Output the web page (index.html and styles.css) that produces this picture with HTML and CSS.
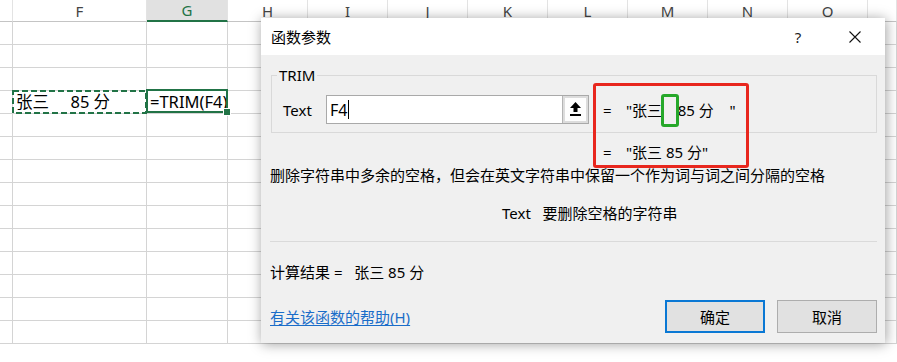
FILE: index.html
```html
<!DOCTYPE html>
<html lang="zh-CN">
<head>
  <meta charset="UTF-8" />
  <title>函数参数 - TRIM</title>
  <link rel="stylesheet" href="styles.css">
</head>
<body>

  <!-- worksheet behind the dialog -->
  <table class="sheet">
    <colgroup>
      <col class="c-e"><col class="c-f"><col class="c-g">
      <col class="c-n"><col class="c-n"><col class="c-n"><col class="c-n">
      <col class="c-n"><col class="c-n"><col class="c-n"><col class="c-n">
      <col>
    </colgroup>
    <tr class="head">
      <th></th><th>F</th><th class="active">G</th><th>H</th><th>I</th><th>J</th><th>K</th><th>L</th><th>M</th><th>N</th><th>O</th><th></th>
    </tr>
    <tr><td></td><td></td><td></td><td></td><td></td><td></td><td></td><td></td><td></td><td></td><td></td><td></td></tr>
    <tr><td></td><td></td><td></td><td></td><td></td><td></td><td></td><td></td><td></td><td></td><td></td><td></td></tr>
    <tr><td></td><td></td><td></td><td></td><td></td><td></td><td></td><td></td><td></td><td></td><td></td><td></td></tr>
    <tr>
      <td></td>
      <td class="src">张三     85 分<svg class="ants" width="135" height="24"><rect x="1" y="1" width="133" height="22" /></svg></td>
      <td class="sel">=TRIM(F4)</td>
      <td></td><td></td><td></td><td></td><td></td><td></td><td></td><td></td><td></td>
    </tr>
    <tr><td></td><td></td><td></td><td></td><td></td><td></td><td></td><td></td><td></td><td></td><td></td><td></td></tr>
    <tr><td></td><td></td><td></td><td></td><td></td><td></td><td></td><td></td><td></td><td></td><td></td><td></td></tr>
    <tr><td></td><td></td><td></td><td></td><td></td><td></td><td></td><td></td><td></td><td></td><td></td><td></td></tr>
    <tr><td></td><td></td><td></td><td></td><td></td><td></td><td></td><td></td><td></td><td></td><td></td><td></td></tr>
    <tr><td></td><td></td><td></td><td></td><td></td><td></td><td></td><td></td><td></td><td></td><td></td><td></td></tr>
    <tr><td></td><td></td><td></td><td></td><td></td><td></td><td></td><td></td><td></td><td></td><td></td><td></td></tr>
    <tr><td></td><td></td><td></td><td></td><td></td><td></td><td></td><td></td><td></td><td></td><td></td><td></td></tr>
    <tr><td></td><td></td><td></td><td></td><td></td><td></td><td></td><td></td><td></td><td></td><td></td><td></td></tr>
    <tr><td></td><td></td><td></td><td></td><td></td><td></td><td></td><td></td><td></td><td></td><td></td><td></td></tr>
    <tr><td></td><td></td><td></td><td></td><td></td><td></td><td></td><td></td><td></td><td></td><td></td><td></td></tr>
  </table>

  <!-- function arguments dialog -->
  <div class="dialog">
    <div class="titlebar">
      <span class="title">函数参数</span>
      <span class="help">?</span>
      <span class="close">
        <svg width="12" height="12" viewBox="0 0 12 12"><path d="M0.5 0.5 L11.5 11.5 M11.5 0.5 L0.5 11.5" /></svg>
      </span>
    </div>

    <div class="dialog-body">
      <fieldset class="args">
        <legend>TRIM</legend>
        <div class="arg-row">
          <label class="arg-name">Text</label>
          <div class="ref-input">
            <span class="ref-text">F4</span><span class="caret"></span>
            <span class="ref-btn">
              <span class="ref-icon">
                <svg width="11" height="15" viewBox="0 0 11 15"><path d="M5.5 0 L0 6 H3.5 V10 H7.5 V6 H11 Z" /><rect x="0" y="12" width="11" height="2" /></svg>
              </span>
            </span>
          </div>
          <span class="arg-value"><span class="eq">=</span>"张三    85 分    "</span>
        </div>
      </fieldset>

      <div class="result-line"><span class="eq">=</span>"张三 85 分"</div>

      <p class="desc">删除字符串中多余的空格，但会在英文字符串中保留一个作为词与词之间分隔的空格</p>
      <p class="param-desc">Text   要删除空格的字符串</p>

      <hr class="sep">

      <div class="calc">计算结果 =   张三 85 分</div>

      <div class="footer">
        <a class="help-link" href="#">有关该函数的帮助(H)</a>
        <button class="btn primary" type="button">确定</button>
        <button class="btn" type="button">取消</button>
      </div>
    </div>

    <!-- annotation boxes drawn over the screenshot -->
    <div class="mark mark-red"></div>
    <div class="mark mark-green"></div>
  </div>

</body>
</html>
```

FILE: styles.css
```css
* {
  box-sizing: border-box;
}

body {
  margin: 0;
  width: 897px;
  height: 362px;
  overflow: hidden;
  position: relative;
  background-color: #fff;
  font-family: "Noto Sans", "Noto Sans CJK SC", sans-serif;
  color: #000;
}

/* worksheet */
.sheet {
  width: 897px;
  border-collapse: separate;
  border-spacing: 0;
  table-layout: fixed;
  font-size: 16.5px;
}

.c-e { width: 13px; }
.c-f { width: 134px; }
.c-g { width: 81px; }
.c-n { width: 80px; }

.sheet tr {
  height: 23px;
}

.sheet tr.head {
  height: 22px;
}

.sheet th,
.sheet td {
  padding: 0;
  border-right: 1px solid #d4d4d4;
  border-bottom: 1px solid #d4d4d4;
  white-space: pre;
  text-align: left;
}

.sheet th {
  font-weight: normal;
  font-size: 15px;
  color: #444;
  text-align: center;
  vertical-align: middle;
  line-height: 20px;
  border-right-color: #e3e3e3;
  border-bottom-color: #c4c4c4;
}

.sheet th.active {
  background-color: #e1e1e1;
  color: #217346;
  border-bottom: 2px solid #217346;
}

.src,
.sel {
  position: relative;
  padding-left: 3px !important;
  line-height: 22px;
}

.ants {
  position: absolute;
  left: -1px;
  top: -1px;
}

.ants rect {
  fill: none;
  stroke: #217346;
  stroke-width: 2;
  stroke-dasharray: 6 3;
}

.sel::after {
  content: "";
  position: absolute;
  left: -1px;
  right: -1px;
  top: -2px;
  bottom: 0;
  border: 2px solid #217346;
}

.sel::before {
  content: "";
  position: absolute;
  right: -4px;
  bottom: -3px;
  width: 6px;
  height: 6px;
  background-color: #217346;
  border: 1px solid #fff;
  z-index: 1;
}

/* dialog */
.dialog {
  position: absolute;
  left: 261px;
  top: 18px;
  width: 624px;
  height: 325px;
  background-color: #f0f0f0;
  box-shadow: 1px 1px 12px rgba(0, 0, 0, 0.38);
  font-size: 15px;
}

.titlebar {
  height: 37px;
  background-color: #fff;
  display: flex;
  align-items: center;
  padding: 0 24px 0 10px;
}

.title {
  flex: 1;
  line-height: 20px;
}

.help {
  width: 20px;
  text-align: center;
  color: #222;
}

.close {
  margin-left: 41px;
  display: flex;
}

.close path {
  stroke: #111;
  stroke-width: 1.1;
  fill: none;
}

.dialog-body {
  padding: 0 8px 10px 9px;
}

.args {
  margin: 10px 0 0 1px;
  padding: 10px 10px 8px 11px;
  border: 1px solid #d9d9d9;
  min-inline-size: 0;
}

.args legend {
  margin-left: -6px;
  padding: 0 2px;
  line-height: 20px;
  font-size: 15px;
}

.arg-row {
  display: flex;
  align-items: center;
}

.arg-name {
  width: 43px;
  padding-top: 1px;
}

.ref-input {
  width: 263px;
  height: 29px;
  display: flex;
  align-items: center;
  background-color: #fff;
  border: 1px solid #a9a9a9;
}

.ref-text {
  padding-left: 3px;
  font-size: 16px;
}

.caret {
  width: 1px;
  height: 19px;
  margin-left: 1px;
  background-color: #000;
}

.ref-btn {
  margin-left: auto;
  width: 26px;
  height: 27px;
  padding: 2px;
  background-color: #dcdcdc;
  border-left: 1px solid #b4b4b4;
  display: flex;
}

.ref-icon {
  flex: 1;
  background-color: #fdfdfd;
  display: flex;
  align-items: center;
  justify-content: center;
}

.ref-icon svg {
  fill: #000;
}

.arg-value {
  margin-left: 14px;
  white-space: pre;
}

.eq {
  display: inline-block;
  width: 23px;
}

.result-line {
  margin-top: 9px;
  padding-left: 333px;
  line-height: 20px;
  white-space: pre;
}

.desc {
  margin: 3px 0 0;
  line-height: 20px;
}

.param-desc {
  margin: 18px 0 0;
  padding-left: 232px;
  line-height: 20px;
  white-space: pre;
}

.sep {
  margin: 18px 0 0;
  border: 0;
  border-top: 1px solid #dadada;
}

.calc {
  margin-top: 20px;
  line-height: 20px;
  white-space: pre;
}

.footer {
  margin-top: 18px;
  display: flex;
  align-items: center;
}

.help-link {
  color: #1a6dc9;
  text-decoration: underline;
  text-underline-offset: 2px;
}

.btn {
  width: 100px;
  height: 33px;
  font-family: inherit;
  font-size: 15px;
  color: #000;
  background-color: #e1e1e1;
  border: 1px solid #adadad;
  padding: 0;
  margin-left: 12px;
}

.btn.primary {
  margin-left: auto;
  border: 2px solid #0a78d4;
}

/* red and green highlight boxes */
.mark {
  position: absolute;
  border-radius: 3px;
}

.mark-red {
  left: 332px;
  top: 65px;
  width: 156px;
  height: 85px;
  border: 3px solid #e8271e;
}

.mark-green {
  left: 400px;
  top: 76px;
  width: 18px;
  height: 33px;
  border: 3px solid #26a82a;
}
```
